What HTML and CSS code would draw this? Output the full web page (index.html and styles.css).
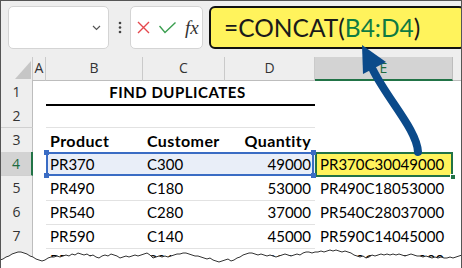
FILE: index.html
```html
<!DOCTYPE html>
<html lang="en">
<head>
    <meta charset="UTF-8">
    <title>Find duplicates</title>
    <link rel="stylesheet" href="styles.css">
</head>
<body>
<div class="shot">
    <div class="formula-bar">
        <div class="name-box">
            <svg width="9" height="6" viewBox="0 0 9 6"><polyline points="1,1 4.5,4.5 8,1" fill="none" stroke="#555" stroke-width="1.2"/></svg>
        </div>
        <div class="dots">
            <svg width="4" height="13" viewBox="0 0 4 13"><circle cx="2" cy="2" r="1.3"/><circle cx="2" cy="6.5" r="1.3"/><circle cx="2" cy="11" r="1.3"/></svg>
        </div>
        <div class="fx-box">
            <svg width="13" height="13" viewBox="0 0 13 13"><path d="M1 1 L12 12 M12 1 L1 12" fill="none" stroke="#e5484d" stroke-width="1.4"/></svg>
            <svg width="17" height="12" viewBox="0 0 17 12"><polyline points="0.5,4 6,10.5 16.5,0.5" fill="none" stroke="#3a9e4f" stroke-width="1.4"/></svg>
            <span class="fx">fx</span>
        </div>
        <div class="formula">=CONCAT(<span class="ref">B4:D4</span>)</div>
    </div>

    <div class="sheet">
        <div class="row head">
            <div class="hc"><svg width="31" height="22" viewBox="0 0 31 22"><polygon points="14,22 30,22 30,4" fill="#c6c6c6"/></svg></div>
            <div class="hc">A</div>
            <div class="hc">B</div>
            <div class="hc">C</div>
            <div class="hc">D</div>
            <div class="hc on">E</div>
            <div class="hc end"></div>
        </div>
        <div class="row">
            <div class="rh">1</div>
            <div></div>
            <div class="cell title">FIND DUPLICATES</div>
            <div></div>
            <div></div>
        </div>
        <div class="row">
            <div class="rh">2</div>
            <div></div>
            <div class="cell"></div>
            <div class="cell"></div>
            <div class="cell"></div>
            <div></div>
            <div></div>
        </div>
        <div class="row">
            <div class="rh">3</div>
            <div></div>
            <div class="cell bold">Product</div>
            <div class="cell bold">Customer</div>
            <div class="cell bold num">Quantity</div>
            <div></div>
            <div></div>
        </div>
        <div class="row">
            <div class="rh on">4</div>
            <div></div>
            <div class="range">
                <div class="cell">PR370</div>
                <div class="cell">C300</div>
                <div class="cell num">49000</div>
                <span class="handle tl"></span>
                <span class="handle tr"></span>
                <span class="handle bl"></span>
                <span class="handle br"></span>
            </div>
            <div class="res active">PR370C30049000<span class="fill"></span></div>
            <div></div>
        </div>
        <div class="row">
            <div class="rh">5</div>
            <div></div>
            <div class="cell">PR490</div>
            <div class="cell">C180</div>
            <div class="cell num">53000</div>
            <div class="res">PR490C18053000</div>
            <div></div>
        </div>
        <div class="row">
            <div class="rh">6</div>
            <div></div>
            <div class="cell">PR540</div>
            <div class="cell">C280</div>
            <div class="cell num">37000</div>
            <div class="res">PR540C28037000</div>
            <div></div>
        </div>
        <div class="row">
            <div class="rh">7</div>
            <div></div>
            <div class="cell">PR590</div>
            <div class="cell">C140</div>
            <div class="cell num">45000</div>
            <div class="res">PR590C14045000</div>
            <div></div>
        </div>
        <div class="row">
            <div class="rh">8</div>
            <div></div>
            <div class="cell">PR640</div>
            <div class="cell">C210</div>
            <div class="cell num">20000</div>
            <div class="res">PR640C21020000</div>
            <div></div>
        </div>
    </div>

    <!-- arrow from the result cell up to the formula -->
    <svg class="arrow" width="462" height="268" viewBox="0 0 462 268">
        <path d="M418 152 C417 130 388 100 373 70" fill="none" stroke="#0b4a8a" stroke-width="8" stroke-linecap="round"/>
        <polygon points="362,45 363,74 386,62" fill="#0b4a8a"/>
    </svg>

    <!-- torn bottom edge -->
    <svg class="torn" width="462" height="28" viewBox="0 240 462 28">
        <polygon fill="#fff" points="0,260 3,259 6,257 9,256 12,254 15,253 18,252 21,252 24,253 27,254 30,256 33,257 36,259 39,260 42,261 45,260 48,258 51,257 54,257 57,256 60,257 63,256 66,255 69,256 72,254 75,255 78,253 81,254 84,255 87,254 90,256 93,255 96,257 99,258 102,256 105,255 108,256 111,254 114,255 117,256 120,258 123,257 126,256 129,257 132,256 135,255 138,256 141,255 144,254 147,253 150,255 153,258 156,257 159,256 162,257 165,256 168,257 171,256 174,255 177,254 180,254 183,253 186,253 189,254 192,255 195,256 198,256 201,257 204,258 207,259 210,258 213,260 216,261 219,262 222,261 225,260 228,259 231,261 234,260 237,258 240,257 243,255 246,254 249,253 252,253 255,254 258,255 261,254 264,255 267,256 270,255 273,256 276,257 279,256 282,255 285,254 288,255 291,256 294,255 297,254 300,255 303,253 306,252 309,252 312,253 315,252 318,252 321,251 324,252 327,251 330,250 333,251 336,250 339,251 342,252 345,251 348,252 351,253 354,255 357,256 360,257 363,256 366,258 369,257 372,255 375,256 378,255 381,254 384,255 387,254 390,255 393,254 396,255 399,254 402,255 405,256 408,255 411,254 414,255 417,256 420,256 423,257 426,256 429,257 432,258 435,257 438,258 441,257 444,258 447,258 450,257 453,258 456,257 459,256 462,255 462,268 0,268"/>
        <polyline fill="none" stroke="#333" stroke-width="1" points="0,260 3,259 6,257 9,256 12,254 15,253 18,252 21,252 24,253 27,254 30,256 33,257 36,259 39,260 42,261 45,260 48,258 51,257 54,257 57,256 60,257 63,256 66,255 69,256 72,254 75,255 78,253 81,254 84,255 87,254 90,256 93,255 96,257 99,258 102,256 105,255 108,256 111,254 114,255 117,256 120,258 123,257 126,256 129,257 132,256 135,255 138,256 141,255 144,254 147,253 150,255 153,258 156,257 159,256 162,257 165,256 168,257 171,256 174,255 177,254 180,254 183,253 186,253 189,254 192,255 195,256 198,256 201,257 204,258 207,259 210,258 213,260 216,261 219,262 222,261 225,260 228,259 231,261 234,260 237,258 240,257 243,255 246,254 249,253 252,253 255,254 258,255 261,254 264,255 267,256 270,255 273,256 276,257 279,256 282,255 285,254 288,255 291,256 294,255 297,254 300,255 303,253 306,252 309,252 312,253 315,252 318,252 321,251 324,252 327,251 330,250 333,251 336,250 339,251 342,252 345,251 348,252 351,253 354,255 357,256 360,257 363,256 366,258 369,257 372,255 375,256 378,255 381,254 384,255 387,254 390,255 393,254 396,255 399,254 402,255 405,256 408,255 411,254 414,255 417,256 420,256 423,257 426,256 429,257 432,258 435,257 438,258 441,257 444,258 447,258 450,257 453,258 456,257 459,256 462,255"/>
    </svg>
</div>
</body>
</html>
```

FILE: styles.css
```css
* {
    box-sizing: border-box;
}
body {
    margin: 0;
    background: #fff;
}
.shot {
    position: relative;
    width: 462px;
    height: 268px;
    border: 1px solid #555;
    border-bottom: none;
    background: #eee;
    overflow: hidden;
    font-family: Lato, "Open Sans", sans-serif;
    color: #000;
}

/* formula bar */
.formula-bar {
    display: flex;
    align-items: flex-start;
    height: 56px;
    padding: 5px 0 0 7px;
}
.name-box {
    width: 101px;
    height: 43px;
    display: flex;
    align-items: center;
    justify-content: flex-end;
    padding-right: 7px;
    background: #fff;
    border: 1px solid #d4d4d4;
    border-radius: 5px;
}
.dots {
    width: 21px;
    height: 43px;
    display: flex;
    align-items: center;
    justify-content: center;
    fill: #444;
}
.fx-box {
    width: 73px;
    height: 43px;
    display: flex;
    align-items: center;
    gap: 9px;
    padding-left: 6px;
    background: #fff;
    border: 1px solid #d4d4d4;
    border-radius: 5px;
}
.fx {
    font-family: "Liberation Serif", serif;
    font-style: italic;
    font-size: 19px;
    color: #333;
}
.formula {
    flex: 1;
    height: 43px;
    margin: 0 -4px 0 6px;
    padding-left: 13px;
    background: #fff35c;
    border: 2px solid #111;
    border-radius: 6px;
    font-size: 24.5px;
    line-height: 39px;
    color: #1a1a1a;
}
.ref {
    color: #0e7a42;
}

/* sheet */
.sheet {
    background: #fff;
}
.row {
    display: grid;
    grid-template-columns: 32px 13px 97px 82px 90px 138px 1fr;
    height: 24px;
    font-size: 15px;
    line-height: 23px;
}
.row.head {
    height: 23px;
    background: #eee;
    font-family: "Open Sans", sans-serif;
    font-size: 14px;
    line-height: 22px;
    color: #333;
}
.hc {
    text-align: center;
    border-right: 1px solid #cacaca;
    border-bottom: 1px solid #bdbdbd;
}
.hc svg {
    display: block;
}
.hc.on {
    background: #d3d3d3;
    color: #1d6b3f;
    border-bottom: 2px solid #217346;
    border-right-color: #bdbdbd;
}
.hc.end {
    border-right: none;
}
.rh {
    background: #eee;
    border-right: 1px solid #bdbdbd;
    border-bottom: 1px solid #d0d0d0;
    text-align: center;
    font-family: "Open Sans", sans-serif;
    font-size: 14px;
    color: #333;
}
.rh.on {
    background: #d3d3d3;
    color: #1d6b3f;
    border-right: 2px solid #217346;
}
.cell {
    padding: 1px 4px 0;
    border-bottom: 1px solid #e2e2e2;
    white-space: nowrap;
}
.num {
    text-align: right;
}
.bold {
    font-weight: bold;
    font-size: 16px;
    letter-spacing: 0.4px;
}
.title {
    grid-column: span 3;
    text-align: center;
    font-weight: bold;
    letter-spacing: 0.5px;
    border-bottom: 2px solid #000;
    padding-right: 10px;
}
.res {
    padding: 1px 5px 0;
    white-space: nowrap;
}

/* B4:D4 reference range */
.range {
    grid-column: span 3;
    display: grid;
    grid-template-columns: 97px 82px 90px;
    position: relative;
    background: #e9eef8;
}
.range .cell {
    border-bottom: none;
}
.range::after {
    content: "";
    position: absolute;
    inset: 0 1px 0 0;
    border: 2px solid #3a6cc4;
}
.handle {
    position: absolute;
    width: 5px;
    height: 5px;
    background: #3a6cc4;
    z-index: 1;
}
.handle.tl { left: -2px; top: -2px; }
.handle.tr { right: -1px; top: -2px; }
.handle.bl { left: -2px; bottom: -2px; }
.handle.br { right: -1px; bottom: -2px; }

/* active cell E4 */
.res.active {
    position: relative;
    background: #fff35c;
}
.res.active::after {
    content: "";
    position: absolute;
    inset: 0 0 -1px 0;
    border: 2px solid #217346;
}
.fill {
    position: absolute;
    right: -3px;
    bottom: -4px;
    width: 6px;
    height: 6px;
    background: #217346;
    border: 1px solid #fff;
    z-index: 1;
}

.arrow {
    position: absolute;
    left: -1px;
    top: -1px;
    z-index: 2;
}
.torn {
    position: absolute;
    left: -1px;
    top: 239px;
    z-index: 2;
}
```
